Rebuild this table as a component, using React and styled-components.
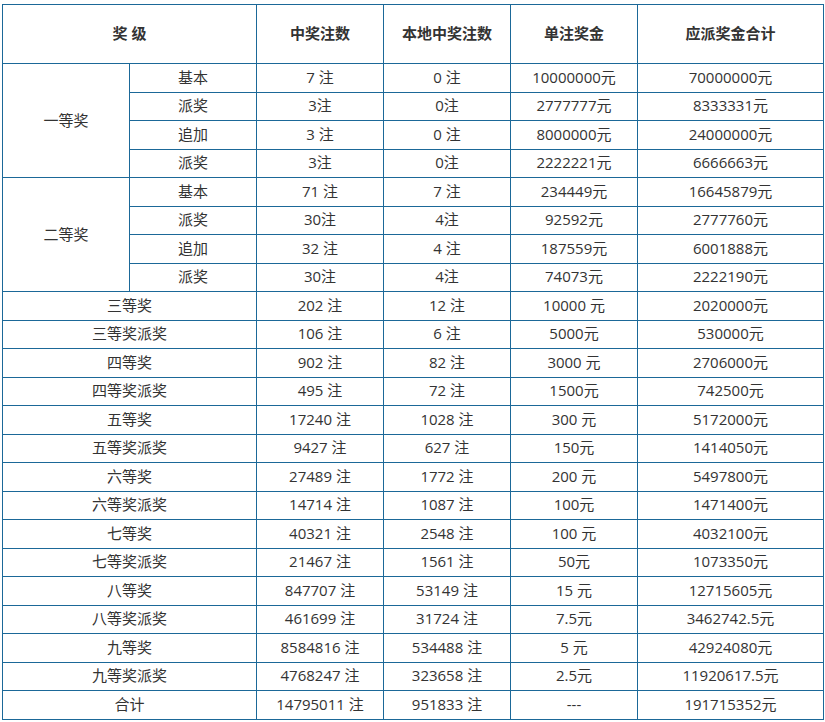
import React from "react";
import styled, { createGlobalStyle } from "styled-components";

const GlobalStyle = createGlobalStyle`
  body {
    margin: 0;
    background: #ffffff;
  }
`;

const firstPrize = [
  ["基本", "7 注", "0 注", "10000000元", "70000000元"],
  ["派奖", "3注", "0注", "2777777元", "8333331元"],
  ["追加", "3 注", "0 注", "8000000元", "24000000元"],
  ["派奖", "3注", "0注", "2222221元", "6666663元"],
];

const secondPrize = [
  ["基本", "71 注", "7 注", "234449元", "16645879元"],
  ["派奖", "30注", "4注", "92592元", "2777760元"],
  ["追加", "32 注", "4 注", "187559元", "6001888元"],
  ["派奖", "30注", "4注", "74073元", "2222190元"],
];

const others = [
  ["三等奖", "202 注", "12 注", "10000 元", "2020000元"],
  ["三等奖派奖", "106 注", "6 注", "5000元", "530000元"],
  ["四等奖", "902 注", "82 注", "3000 元", "2706000元"],
  ["四等奖派奖", "495 注", "72 注", "1500元", "742500元"],
  ["五等奖", "17240 注", "1028 注", "300 元", "5172000元"],
  ["五等奖派奖", "9427 注", "627 注", "150元", "1414050元"],
  ["六等奖", "27489 注", "1772 注", "200 元", "5497800元"],
  ["六等奖派奖", "14714 注", "1087 注", "100元", "1471400元"],
  ["七等奖", "40321 注", "2548 注", "100 元", "4032100元"],
  ["七等奖派奖", "21467 注", "1561 注", "50元", "1073350元"],
  ["八等奖", "847707 注", "53149 注", "15 元", "12715605元"],
  ["八等奖派奖", "461699 注", "31724 注", "7.5元", "3462742.5元"],
  ["九等奖", "8584816 注", "534488 注", "5 元", "42924080元"],
  ["九等奖派奖", "4768247 注", "323658 注", "2.5元", "11920617.5元"],
  ["合计", "14795011 注", "951833 注", "---", "191715352元"],
];

function App() {
  const group = (name, rows) =>
    rows.map((r, i) => (
      <Row key={name + i}>
        {i === 0 && <Cell rowSpan={rows.length}>{name}</Cell>}
        {r.map((v, j) => (
          <Cell key={j}>{v}</Cell>
        ))}
      </Row>
    ));

  return (
    <Page>
      <GlobalStyle />
      <PrizeTable>
        <colgroup>
          <col style={{ width: 127 }} />
          <col style={{ width: 127 }} />
          <col style={{ width: 127 }} />
          <col style={{ width: 127 }} />
          <col style={{ width: 127 }} />
          <col style={{ width: 186 }} />
        </colgroup>
        <thead>
          <HeadRow>
            <HeadCell colSpan={2}>奖 级</HeadCell>
            <HeadCell>中奖注数</HeadCell>
            <HeadCell>本地中奖注数</HeadCell>
            <HeadCell>单注奖金</HeadCell>
            <HeadCell>应派奖金合计</HeadCell>
          </HeadRow>
        </thead>
        <tbody>
          {group("一等奖", firstPrize)}
          {group("二等奖", secondPrize)}
          {others.map((r) => (
            <Row key={r[0]}>
              <Cell colSpan={2}>{r[0]}</Cell>
              {r.slice(1).map((v, j) => (
                <Cell key={j}>{v}</Cell>
              ))}
            </Row>
          ))}
        </tbody>
      </PrizeTable>
    </Page>
  );
}

const Page = styled.div`
  padding: 4px 2px;
`;

const PrizeTable = styled.table`
  width: 821px;
  table-layout: fixed;
  border-collapse: collapse;
  font-family: "Open Sans", "Noto Sans CJK SC", sans-serif;
  font-size: 15px;
  color: #333333;
`;

const HeadRow = styled.tr`
  height: 59px;
`;

const Row = styled.tr`
  height: 28.5px;
`;

const HeadCell = styled.th`
  border: 1px solid #1b6898;
  font-weight: bold;
  text-align: center;
  padding: 0 0 3px;
`;

const Cell = styled.td`
  border: 1px solid #1b6898;
  text-align: center;
  padding: 0 0 2px;
  line-height: 18px;
`;

export default App;
